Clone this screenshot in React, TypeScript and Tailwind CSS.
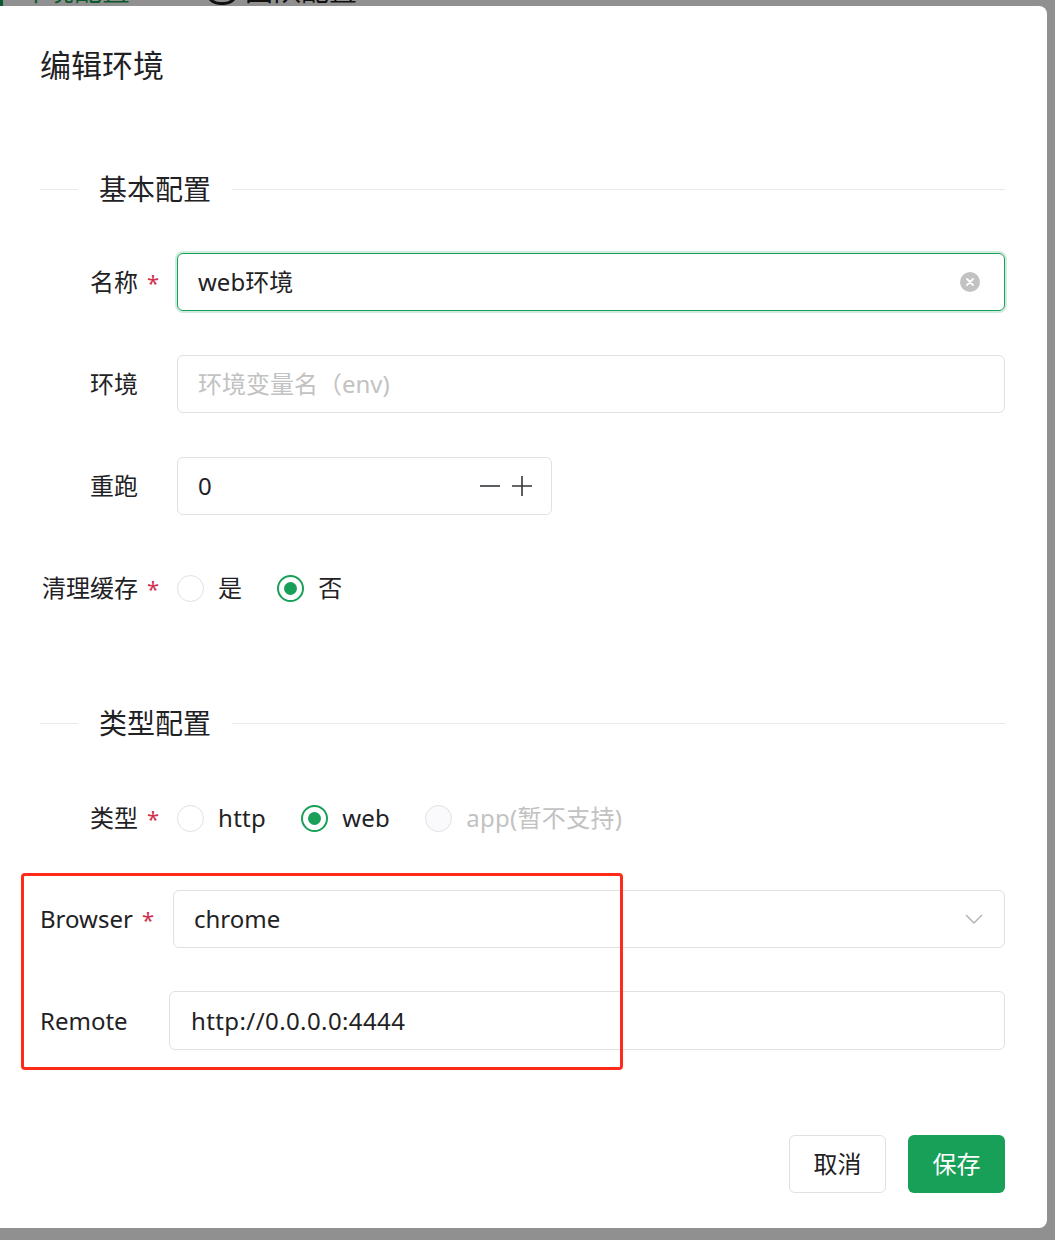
import React from 'react';

const font = { fontFamily: '"Noto Sans", "Noto Sans CJK SC", sans-serif' };

const Star = ({ show = true }: { show?: boolean }) => (
    <span className={`ml-[9px] w-[10px] text-[22px] leading-none text-[#d03050] ${show ? '' : 'invisible'}`}>*</span>
);

const Divider = ({ title }: { title: string }) => (
    <div className="flex items-center h-[40px]">
        <div className="w-[38px] h-px bg-[#e8e8ee]" />
        <span className="px-[21px] text-[28px] leading-[40px] text-[#1f2225]">{title}</span>
        <div className="flex-1 h-px bg-[#e8e8ee]" />
    </div>
);

const Radio = ({ label, checked, disabled }: { label: string; checked?: boolean; disabled?: boolean }) => (
    <div className="flex items-center mr-[35px]">
        {checked ? (
            <span className="w-[27px] h-[27px] rounded-full border-2 border-[#18a058] flex items-center justify-center">
                <span className="w-[13px] h-[13px] rounded-full bg-[#18a058]" />
            </span>
        ) : (
            <span className={`w-[27px] h-[27px] rounded-full border-[1.5px] border-[#e0e0e6] ${disabled ? 'bg-[#fafafc]' : 'bg-white'}`} />
        )}
        <span className={`ml-[14px] text-[24px] tracking-[0.3px] ${disabled ? 'text-[#c2c2c2]' : 'text-[#1f2225]'}`}>{label}</span>
    </div>
);

const Label = ({ text, req }: { text: string; req?: boolean }) => (
    <div className="w-[117px] flex items-center justify-end text-[24px] text-[#1f2225] mr-[20px]">
        <span>{text}</span>
        <Star show={!!req} />
    </div>
);

export default function App() {
    return (
        <div className="w-[1055px] h-[1240px] bg-[#909090] overflow-hidden" style={font}>
            {/* page behind the dialog, mostly covered */}
            <div className="h-[6px] overflow-hidden">
                <div className="flex items-center -mt-[26px] h-[32px] text-[28px]">
                    <div className="w-[3px] h-[32px] bg-[#0b5a2e]" />
                    <span className="ml-[15px] text-[#0b5a2e]">环境配置</span>
                    <span className="ml-[75px] w-[34px] h-[30px] rounded-full border-[3px] border-[#111]" />
                    <span className="ml-[6px] text-[#111]">团队配置</span>
                </div>
            </div>

            <div className="relative w-[1047px] h-[1222px] bg-white rounded-r-[8px] pl-[40px] pr-[42px] pt-[39px]">
                <div className="text-[31px] leading-[40px] text-[#1f2225]">编辑环境</div>

                <div className="mt-[84px]">
                    <Divider title="基本配置" />
                </div>

                <div className="mt-[44px] flex items-center h-[58px]">
                    <Label text="名称" req />
                    <div className="flex-1 h-[58px] rounded-[6px] border border-[#18a058] shadow-[0_0_0_2px_rgba(24,160,88,0.2)] flex items-center pl-[20px] pr-[24px]">
                        <span className="flex-1 text-[24px] text-[#1f2225]">web环境</span>
                        <span className="w-[20px] h-[20px] rounded-full bg-[#c2c2c2] flex items-center justify-center">
                            <svg width="10" height="10" viewBox="0 0 10 10">
                                <path d="M2 2L8 8M8 2L2 8" stroke="#fff" strokeWidth="1.8" strokeLinecap="round" />
                            </svg>
                        </span>
                    </div>
                </div>

                <div className="mt-[44px] flex items-center h-[58px]">
                    <Label text="环境" />
                    <div className="flex-1 h-[58px] rounded-[6px] border border-[#e0e0e6] flex items-center pl-[20px]">
                        <span className="text-[24px] text-[#c2c2c2]">环境变量名（env)</span>
                    </div>
                </div>

                <div className="mt-[44px] flex items-center h-[58px]">
                    <Label text="重跑" />
                    <div className="w-[375px] h-[58px] rounded-[6px] border border-[#e0e0e6] flex items-center pl-[20px] pr-[18px]">
                        <span className="flex-1 text-[24px] text-[#1f2225]">0</span>
                        <svg width="22" height="22" viewBox="0 0 22 22" className="mr-[10px]">
                            <path d="M1 11H21" stroke="#333639" strokeWidth="1.6" />
                        </svg>
                        <svg width="22" height="22" viewBox="0 0 22 22">
                            <path d="M1 11H21M11 1V21" stroke="#333639" strokeWidth="1.6" />
                        </svg>
                    </div>
                </div>

                <div className="mt-[44px] flex items-center h-[58px]">
                    <Label text="清理缓存" req />
                    <Radio label="是" />
                    <Radio label="否" checked />
                </div>

                <div className="mt-[86px]">
                    <Divider title="类型配置" />
                </div>

                <div className="mt-[46px] flex items-center h-[58px]">
                    <Label text="类型" req />
                    <Radio label="http" />
                    <Radio label="web" checked />
                    <Radio label="app(暂不支持)" disabled />
                </div>

                <div className="mt-[43px] flex items-center h-[58px]">
                    <div className="w-[133px] flex items-center text-[24px] text-[#1f2225]">
                        <span>Browser</span>
                        <Star />
                    </div>
                    <div className="flex-1 h-[58px] rounded-[6px] border border-[#e0e0e6] flex items-center pl-[20px] pr-[20px]">
                        <span className="flex-1 text-[24px] text-[#1f2225]">chrome</span>
                        <svg width="20" height="12" viewBox="0 0 20 12">
                            <path d="M2 2L10 10L18 2" stroke="#b0b0b4" strokeWidth="1.4" fill="none" />
                        </svg>
                    </div>
                </div>

                <div className="mt-[43px] flex items-center h-[59px]">
                    <div className="w-[129px] text-[24px] text-[#1f2225]">Remote</div>
                    <div className="flex-1 h-[59px] rounded-[6px] border border-[#e0e0e6] flex items-center pl-[21px]">
                        <span className="text-[24px] tracking-[0.4px] text-[#1f2225]">http://0.0.0.0:4444</span>
                    </div>
                </div>

                <div className="mt-[85px] flex justify-end gap-[22px]">
                    <button className="w-[97px] h-[58px] rounded-[6px] border border-[#e0e0e6] bg-white text-[24px] text-[#1f2225]">取消</button>
                    <button className="w-[97px] h-[58px] rounded-[6px] bg-[#18a058] text-[24px] text-white">保存</button>
                </div>

                {/* annotation box */}
                <div className="absolute left-[21px] top-[867px] w-[602px] h-[197px] border-[3.5px] border-[#ff2a1a] rounded-[4px] pointer-events-none" />
            </div>
        </div>
    );
}
